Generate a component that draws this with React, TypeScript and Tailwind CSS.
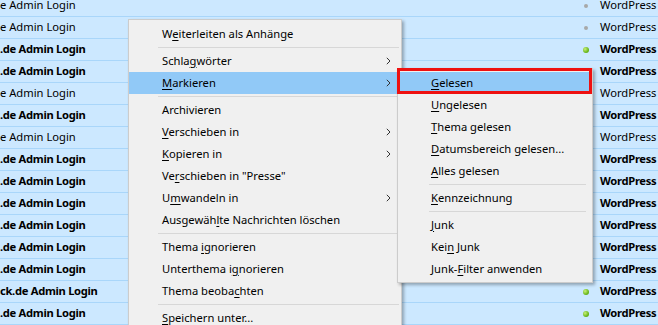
import React from 'react';

type Row = { left: string; bold: boolean; dot: 'grey' | 'green' | null };

const rows: Row[] = [
  { left: 'e Admin Login', bold: false, dot: 'grey' },
  { left: 'e Admin Login', bold: false, dot: 'grey' },
  { left: '.de Admin Login', bold: true, dot: 'green' },
  { left: '.de Admin Login', bold: true, dot: null },
  { left: 'e Admin Login', bold: false, dot: null },
  { left: '.de Admin Login', bold: true, dot: null },
  { left: 'e Admin Login', bold: false, dot: null },
  { left: '.de Admin Login', bold: true, dot: null },
  { left: '.de Admin Login', bold: true, dot: null },
  { left: '.de Admin Login', bold: true, dot: null },
  { left: '.de Admin Login', bold: true, dot: null },
  { left: '.de Admin Login', bold: true, dot: null },
  { left: '.de Admin Login', bold: true, dot: null },
  { left: 'ck.de Admin Login', bold: true, dot: 'green' },
  { left: '.de Admin Login', bold: true, dot: 'green' },
];

type Item =
  | { sep: true }
  | { sep?: false; pre: string; key: string; post: string; sub?: boolean; active?: boolean };

const mainMenu: Item[] = [
  { pre: 'W', key: 'e', post: 'iterleiten als Anhänge' },
  { sep: true },
  { pre: 'Schla', key: 'g', post: 'wörter', sub: true },
  { pre: '', key: 'M', post: 'arkieren', sub: true, active: true },
  { sep: true },
  { pre: 'Archivieren', key: '', post: '' },
  { pre: '', key: 'V', post: 'erschieben in', sub: true },
  { pre: '', key: 'K', post: 'opieren in', sub: true },
  { pre: 'Ve', key: 'r', post: 'schieben in "Presse"' },
  { pre: 'U', key: 'm', post: 'wandeln in', sub: true },
  { pre: 'Ausgewäh', key: 'l', post: 'te Nachrichten löschen' },
  { sep: true },
  { pre: 'Thema ', key: 'i', post: 'gnorieren' },
  { pre: 'Unterthema i', key: 'g', post: 'norieren' },
  { pre: 'Thema beoba', key: 'c', post: 'hten' },
  { sep: true },
  { pre: '', key: 'S', post: 'peichern unter...' },
];

const subMenu: Item[] = [
  { pre: '', key: 'G', post: 'elesen', active: true },
  { pre: '', key: 'U', post: 'ngelesen' },
  { pre: '', key: 'T', post: 'hema gelesen' },
  { pre: '', key: 'D', post: 'atumsbereich gelesen...' },
  { pre: '', key: 'A', post: 'lles gelesen' },
  { sep: true },
  { pre: '', key: 'K', post: 'ennzeichnung' },
  { sep: true },
  { pre: '', key: 'J', post: 'unk' },
  { pre: 'Kei', key: 'n', post: ' Junk' },
  { pre: 'Junk-', key: 'F', post: 'ilter anwenden' },
];

function Chevron() {
  return (
    <svg width="5" height="8" viewBox="0 0 5 8" className="shrink-0">
      <path d="M0.8 0.8 L4 4 L0.8 7.2" fill="none" stroke="#333" strokeWidth="1" />
    </svg>
  );
}

function MenuList({ items, sepInset }: { items: Item[]; sepInset: string }) {
  return (
    <>
      {items.map((it, i) =>
        it.sep ? (
          <div key={i} className={`flex h-[5px] items-center ${sepInset}`}>
            <div className="h-px w-full bg-[#d7d7d7]" />
          </div>
        ) : (
          <div
            key={i}
            className={`flex h-[22px] items-center pl-[33px] pr-[10px] ${it.active ? 'bg-[#91c9f7]' : ''}`}
          >
            <span className="flex-1 whitespace-nowrap">
              {it.pre}
              {it.key && <span className="underline underline-offset-2">{it.key}</span>}
              {it.post}
            </span>
            {it.sub && <Chevron />}
          </div>
        )
      )}
    </>
  );
}

export default function App() {
  return (
    <div
      className="relative h-[325px] w-[658px] overflow-hidden bg-[#cce8ff] text-[11.2px] text-black"
      style={{ fontFamily: '"Noto Sans", "Open Sans", sans-serif' }}
    >
      <div className="-mt-[5px] flex flex-col">
        {rows.map((r, i) => (
          <div
            key={i}
            className={`flex h-[22px] items-center border-b border-[#a9d6fa] ${r.bold ? 'font-bold tracking-[-0.3px]' : ''}`}
          >
            <span className="w-[582px] whitespace-nowrap">{r.left}</span>
            <span className="flex w-[18px] items-center justify-start pl-[1px]">
              {r.dot === 'grey' && <span className="ml-[1px] h-[4px] w-[4px] rounded-full bg-[#a8a8a8]" />}
              {r.dot === 'green' && (
                <span className="h-[6px] w-[6px] rounded-full bg-[radial-gradient(circle_at_35%_35%,#c8f07a,#6cb81e_60%,#4f9410)]" />
              )}
            </span>
            <span className="whitespace-nowrap">WordPress</span>
          </div>
        ))}
      </div>

      <div className="absolute left-[128px] top-[19px] w-[274px] border border-[#cccccc] bg-[#f0f0f0] pt-[3px] shadow-[2px_2px_3px_rgba(0,0,0,0.3)]">
        <MenuList items={mainMenu} sepInset="pl-[29px] pr-[2px]" />
      </div>

      <div className="absolute left-[397px] top-[68px] w-[196px] border border-[#cccccc] bg-[#f0f0f0] pb-[2px] pt-[3px] shadow-[2px_2px_3px_rgba(0,0,0,0.3)]">
        <MenuList items={subMenu} sepInset="pl-[31px] pr-[6px]" />
      </div>

      <div className="absolute left-[397px] top-[68px] h-[26px] w-[195px] border-[3px] border-[#ee1111]" />
    </div>
  );
}
